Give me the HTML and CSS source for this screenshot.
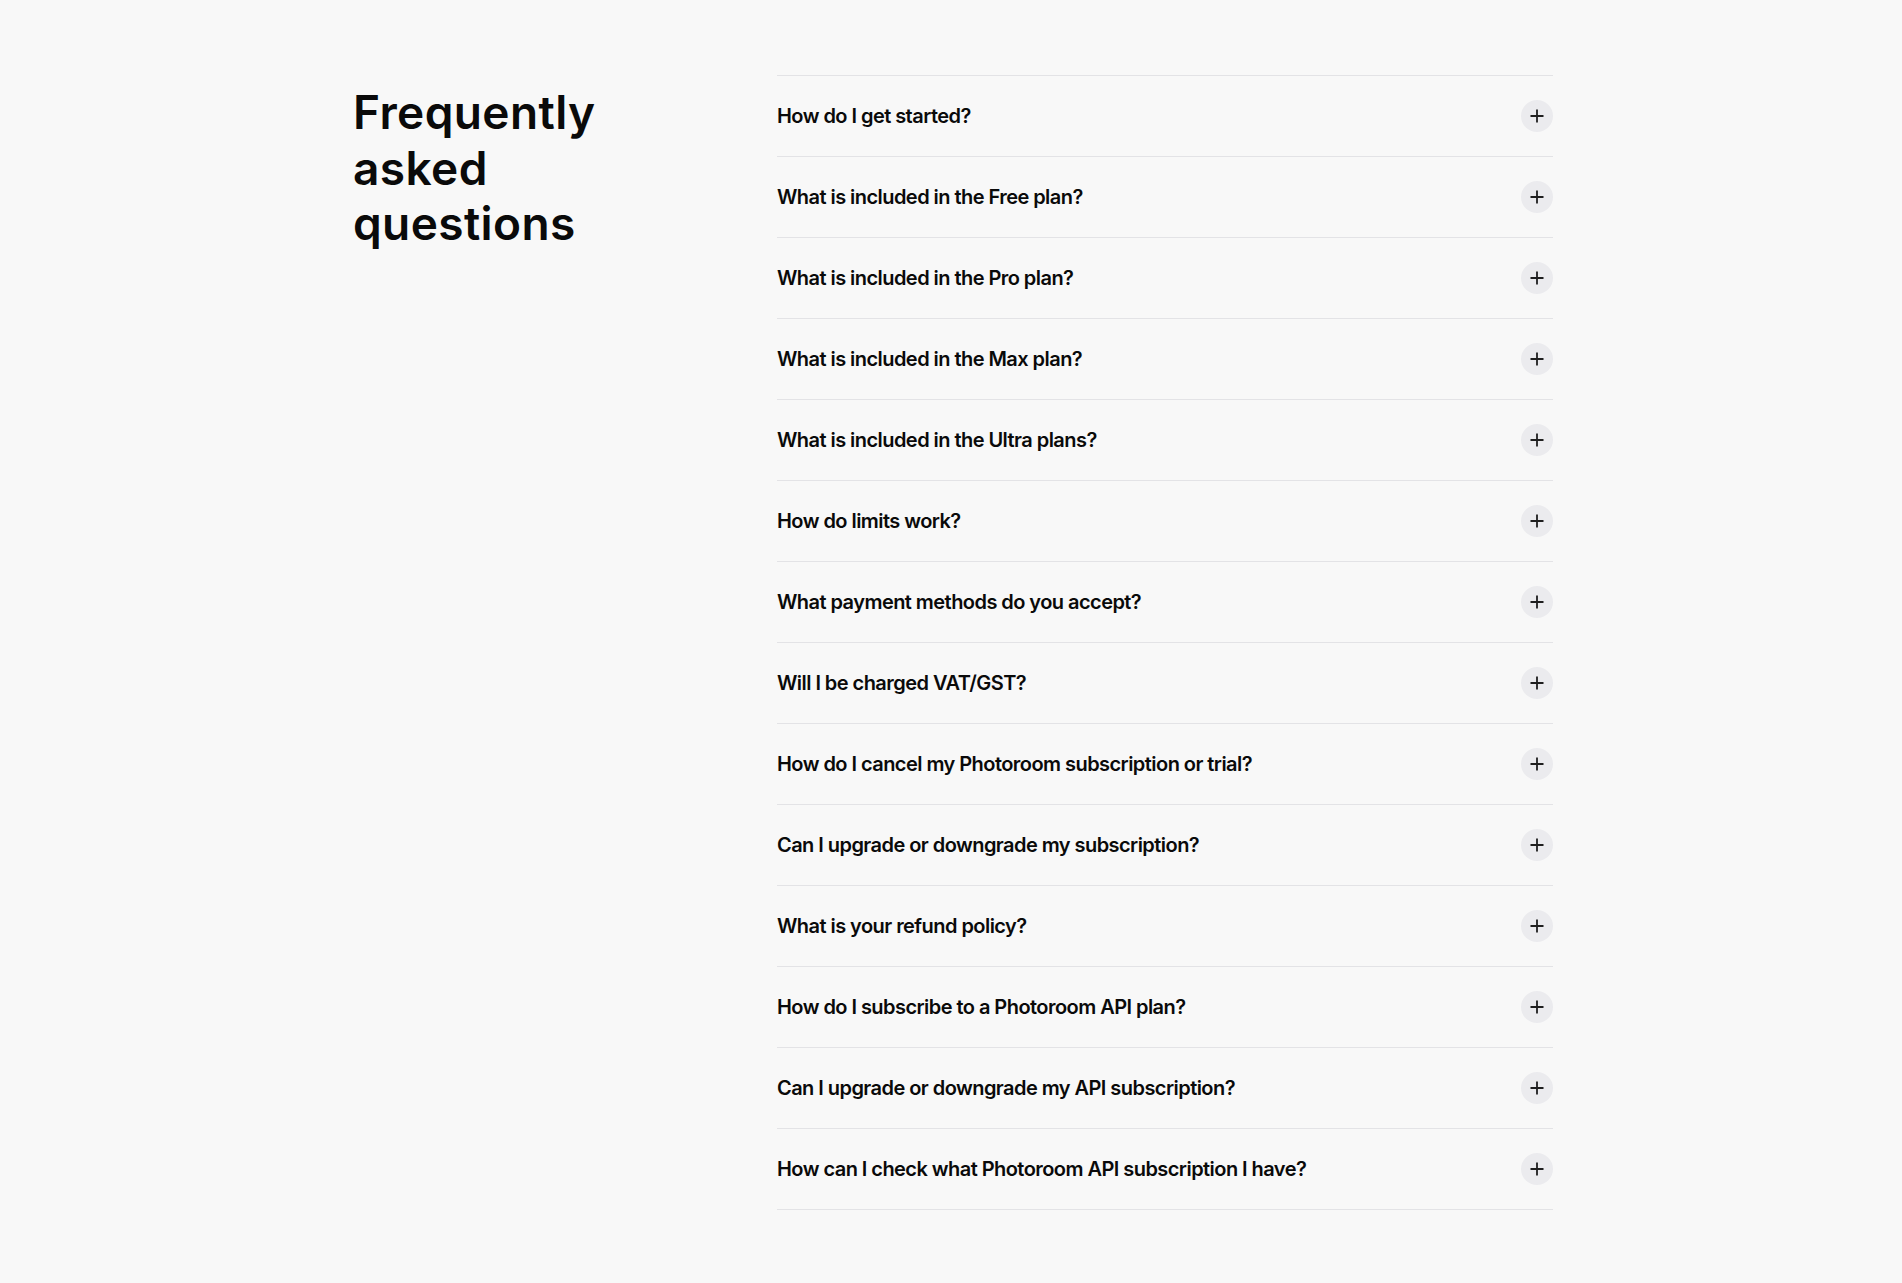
FILE: index.html
```html
<!DOCTYPE html>
<html lang="en">
<head>
<meta charset="utf-8">
<title>FAQ</title>
<link rel="stylesheet" href="styles.css">
</head>
<body>
<section class="faq">
  <h2 class="faq-title">Frequently asked questions</h2>
  <ul class="faq-list">
    <li class="faq-item"><span class="faq-q">How do I get started?</span><span class="faq-btn"><svg viewBox="0 0 16 16" width="16" height="16"><path d="M8 1.5v13M1.5 8h13" stroke="#1f1f1f" stroke-width="1.8" fill="none"/></svg></span></li>
    <li class="faq-item"><span class="faq-q">What is included in the Free plan?</span><span class="faq-btn"><svg viewBox="0 0 16 16" width="16" height="16"><path d="M8 1.5v13M1.5 8h13" stroke="#1f1f1f" stroke-width="1.8" fill="none"/></svg></span></li>
    <li class="faq-item"><span class="faq-q">What is included in the Pro plan?</span><span class="faq-btn"><svg viewBox="0 0 16 16" width="16" height="16"><path d="M8 1.5v13M1.5 8h13" stroke="#1f1f1f" stroke-width="1.8" fill="none"/></svg></span></li>
    <li class="faq-item"><span class="faq-q">What is included in the Max plan?</span><span class="faq-btn"><svg viewBox="0 0 16 16" width="16" height="16"><path d="M8 1.5v13M1.5 8h13" stroke="#1f1f1f" stroke-width="1.8" fill="none"/></svg></span></li>
    <li class="faq-item"><span class="faq-q">What is included in the Ultra plans?</span><span class="faq-btn"><svg viewBox="0 0 16 16" width="16" height="16"><path d="M8 1.5v13M1.5 8h13" stroke="#1f1f1f" stroke-width="1.8" fill="none"/></svg></span></li>
    <li class="faq-item"><span class="faq-q">How do limits work?</span><span class="faq-btn"><svg viewBox="0 0 16 16" width="16" height="16"><path d="M8 1.5v13M1.5 8h13" stroke="#1f1f1f" stroke-width="1.8" fill="none"/></svg></span></li>
    <li class="faq-item"><span class="faq-q">What payment methods do you accept?</span><span class="faq-btn"><svg viewBox="0 0 16 16" width="16" height="16"><path d="M8 1.5v13M1.5 8h13" stroke="#1f1f1f" stroke-width="1.8" fill="none"/></svg></span></li>
    <li class="faq-item"><span class="faq-q">Will I be charged VAT/GST?</span><span class="faq-btn"><svg viewBox="0 0 16 16" width="16" height="16"><path d="M8 1.5v13M1.5 8h13" stroke="#1f1f1f" stroke-width="1.8" fill="none"/></svg></span></li>
    <li class="faq-item"><span class="faq-q">How do I cancel my Photoroom subscription or trial?</span><span class="faq-btn"><svg viewBox="0 0 16 16" width="16" height="16"><path d="M8 1.5v13M1.5 8h13" stroke="#1f1f1f" stroke-width="1.8" fill="none"/></svg></span></li>
    <li class="faq-item"><span class="faq-q">Can I upgrade or downgrade my subscription?</span><span class="faq-btn"><svg viewBox="0 0 16 16" width="16" height="16"><path d="M8 1.5v13M1.5 8h13" stroke="#1f1f1f" stroke-width="1.8" fill="none"/></svg></span></li>
    <li class="faq-item"><span class="faq-q">What is your refund policy?</span><span class="faq-btn"><svg viewBox="0 0 16 16" width="16" height="16"><path d="M8 1.5v13M1.5 8h13" stroke="#1f1f1f" stroke-width="1.8" fill="none"/></svg></span></li>
    <li class="faq-item"><span class="faq-q">How do I subscribe to a Photoroom API plan?</span><span class="faq-btn"><svg viewBox="0 0 16 16" width="16" height="16"><path d="M8 1.5v13M1.5 8h13" stroke="#1f1f1f" stroke-width="1.8" fill="none"/></svg></span></li>
    <li class="faq-item"><span class="faq-q">Can I upgrade or downgrade my API subscription?</span><span class="faq-btn"><svg viewBox="0 0 16 16" width="16" height="16"><path d="M8 1.5v13M1.5 8h13" stroke="#1f1f1f" stroke-width="1.8" fill="none"/></svg></span></li>
    <li class="faq-item"><span class="faq-q">How can I check what Photoroom API subscription I have?</span><span class="faq-btn"><svg viewBox="0 0 16 16" width="16" height="16"><path d="M8 1.5v13M1.5 8h13" stroke="#1f1f1f" stroke-width="1.8" fill="none"/></svg></span></li>
  </ul>
</section>
</body>
</html>
```
FILE: styles.css
```css
html, body {
  margin: 0;
  padding: 0;
  background: #f8f8f8;
}
body {
  font-family: Inter, "Noto Sans", sans-serif;
  color: #0a0a0a;
}
.faq {
  width: 1202px;
  margin: 0 auto;
  padding-top: 75px;
  display: grid;
  grid-template-columns: 427px 776px;
}
.faq-title {
  margin: 10px 0 0 3px;
  font-size: 46px;
  line-height: 55.5px;
  font-weight: 600;
  letter-spacing: 0.4px;
  width: 280px;
}
.faq-list {
  list-style: none;
  margin: 0;
  padding: 0;
  border-top: 1px solid #e3e3e6;
}
.faq-item {
  height: 80px;
  border-bottom: 1px solid #e3e3e6;
  display: flex;
  align-items: center;
  justify-content: space-between;
}
.faq-q {
  font-size: 20px;
  font-weight: 600;
  letter-spacing: -0.55px;
}
.faq-btn {
  width: 32px;
  height: 32px;
  border-radius: 50%;
  background: #ebebee;
  display: flex;
  align-items: center;
  justify-content: center;
}
```
